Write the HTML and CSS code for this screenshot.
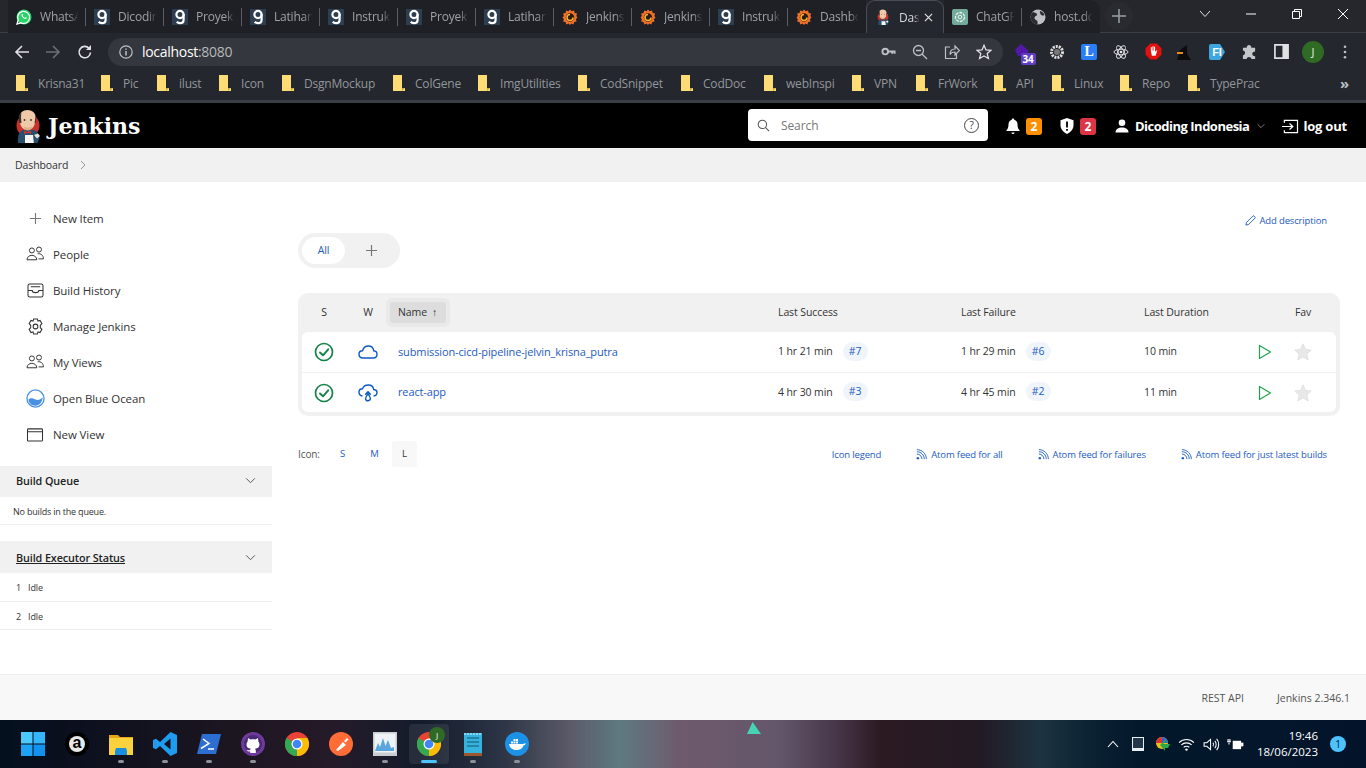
FILE: index.html
```html
<!DOCTYPE html>
<html lang="en">
<head>
    <meta charset="UTF-8">
    <meta name="viewport" content="width=device-width, initial-scale=1.0">
    <title>Dashboard [Jenkins]</title>
    <link rel="stylesheet" href="styles.css">
</head>
<body>
    <svg class="defs" width="0" height="0">
        <symbol id="i-dicoding" viewBox="0 0 16 16">
            <rect width="16" height="16" fill="#2d3e50"/>
            <circle cx="8" cy="5.5" r="3.6" fill="none" stroke="#fff" stroke-width="2.2"/>
            <path d="M11.6 5v5.4c0 2.4-1.5 3.8-3.6 3.8-1.3 0-2.5-.5-3.2-1.4" fill="none" stroke="#fff" stroke-width="2.2"/>
        </symbol>
        <symbol id="i-grafana" viewBox="0 0 16 16">
            <path d="M8 .5l1.7 1.8 2.3-.8.7 2.400 2.400.7-.8 2.300 1.200 1.600-1.700 1.700.8 2.300-2.400.6-.8 2.300-2.200-.8L8 16l-1.500-1.400-2.200.8-.8-2.300-2.400-.6.8-2.300L.5 8.500l1.400-1.600-.8-2.300 2.400-.7.7-2.400 2.300.8z" fill="#f0702a"/>
            <circle cx="8" cy="8.5" r="4.2" fill="#2a1c12"/>
            <path d="M8 5.500a3 3 0 1 0 3 3" fill="none" stroke="#fbb034" stroke-width="1.6"/>
        </symbol>
        <symbol id="i-jenkins" viewBox="0 0 26 34">
            <circle cx="13" cy="16.500" r="11.500" fill="#c8322d"/>
            <path d="M3 34c-.5-5 0-11 5-13h11c3.500 1 5 5 5.500 8l-2 5z" fill="#26506e"/>
            <path d="M10 26h8l.8 8H10z" fill="#f6f4ef"/>
            <path d="M19 26l4-1.500 2 2.500-3 2.500z" fill="#e8e2d8"/>
            <path d="M4.500 8.500C4 4 8 1 12.500 1s8.500 3 8 7.500l-.5 5c-.5 4.500-3.500 7.500-7.500 7.500s-7-3-7.500-7.500z" fill="#efc9a8"/>
            <path d="M4.500 14C3 10 4 5.500 6.500 3.500 5.800 6.500 6 9.500 6.500 14zM20.500 14c1-3 1-5 .3-7l-1.300 7z" fill="#3c3230"/>
            <path d="M8.500 17.500c2.500 1.500 5.500 1.500 8.500 0-.5 3-2.500 4-4.200 4S9 20.500 8.500 17.500z" fill="#d9b08c"/>
            <path d="M9 21.500l3.500 1.500 3.500-1.500v3.500L12.500 23.800 9 25z" fill="#d8322c"/>
            <circle cx="9.500" cy="11" r=".9" fill="#333"/>
            <circle cx="16" cy="11" r=".9" fill="#333"/>
        </symbol>
        <symbol id="i-folder" viewBox="0 0 12 16">
            <path d="M0 0h9v13h3v3H0z" fill="#fddc75"/>
            <path d="M9 13h3l-3 3z" fill="#c9a646"/>
        </symbol>
        <symbol id="i-people" viewBox="0 0 20 18">
            <g fill="none" stroke="#333" stroke-width="1.100">
                <circle cx="6.500" cy="5" r="2.800"/>
                <circle cx="14.500" cy="4" r="2.800"/>
                <path d="M1 15.500c0-3 2.500-5 5.500-5s5.500 2 5.500 5z"/>
                <path d="M13 8.700c3.500-.5 6.500 1.800 6.500 5.800h-5.500"/>
            </g>
        </symbol>
        <symbol id="i-chevron" viewBox="0 0 12 8">
            <path d="M1 1.500l5 5 5-5" fill="none" stroke="currentColor" stroke-width="1.100"/>
        </symbol>
        <symbol id="i-ok" viewBox="0 0 20 20">
            <circle cx="10" cy="10" r="8.500" fill="none" stroke="#138347" stroke-width="1.700"/>
            <path d="M6 10.500l3 2.800 5.200-6" fill="none" stroke="#138347" stroke-width="1.900" stroke-linecap="round" stroke-linejoin="round"/>
        </symbol>
        <symbol id="i-play" viewBox="0 0 14 16">
            <path d="M1.500 1.500v13l11-6.500z" fill="none" stroke="#1ea64b" stroke-width="1.200" stroke-linejoin="round"/>
        </symbol>
        <symbol id="i-star" viewBox="0 0 18 18">
            <path d="M9 .8l2.500 5.500 5.800.7-4.300 4 1.200 6L9 14l-5.200 3 1.200-6-4.300-4 5.800-.7z" fill="#e8e8e8" stroke="#d8d8d8" stroke-width=".6"/>
        </symbol>
        <symbol id="i-rss" viewBox="0 0 12 12">
            <g fill="none" stroke="#1d5cc0" stroke-width="1">
                <path d="M1 5.500c3 0 5.500 2.500 5.500 5.500"/>
                <path d="M1 3c4.500 0 8 3.500 8 8"/>
                <path d="M1 .7c5.700 0 10.300 4.600 10.300 10.300"/>
            </g>
            <circle cx="2" cy="10" r="1.300" fill="#1d5cc0"/>
        </symbol>
        <symbol id="i-chrome" viewBox="0 0 24 24">
            <circle cx="12" cy="12" r="12" fill="#ea4335"/>
            <path d="M12 12L1.600 6A12 12 0 0 0 12 24l5-7z" fill="#34a853"/>
            <path d="M12 6h10.400A12 12 0 0 1 12 24z" fill="#fbbc05"/>
            <circle cx="12" cy="12" r="5.500" fill="#fff"/>
            <circle cx="12" cy="12" r="4.300" fill="#4285f4"/>
        </symbol>
    </svg>

    <div class="chrome">
        <div class="tabstrip">
            <div class="tab">
                <svg class="fav" viewBox="0 0 16 16"><circle cx="8" cy="8" r="7.500" fill="#25d366"/><path d="M1 15l1.200-4A6 6 0 1 1 5 13.800z" fill="none" stroke="#fff" stroke-width="1.300"/><path d="M5.800 5c.5-.6 1-.4 1.300.5.2.6-.4 1-.3 1.300.4.900 1 1.500 1.900 1.900.4 0 .7-.6 1.200-.4.900.3 1.100.8.600 1.300-1.700 1.700-6.300-2.500-4.700-4.600z" fill="#fff"/></svg>
                <span class="tab-title">WhatsA</span>
            </div>
            <div class="tab"><svg class="fav"><use href="#i-dicoding"/></svg><span class="tab-title">Dicodin</span></div>
            <div class="tab"><svg class="fav"><use href="#i-dicoding"/></svg><span class="tab-title">Proyek</span></div>
            <div class="tab"><svg class="fav"><use href="#i-dicoding"/></svg><span class="tab-title">Latihan</span></div>
            <div class="tab"><svg class="fav"><use href="#i-dicoding"/></svg><span class="tab-title">Instruk</span></div>
            <div class="tab"><svg class="fav"><use href="#i-dicoding"/></svg><span class="tab-title">Proyek</span></div>
            <div class="tab"><svg class="fav"><use href="#i-dicoding"/></svg><span class="tab-title">Latihan</span></div>
            <div class="tab"><svg class="fav"><use href="#i-grafana"/></svg><span class="tab-title">Jenkins</span></div>
            <div class="tab"><svg class="fav"><use href="#i-grafana"/></svg><span class="tab-title">Jenkins</span></div>
            <div class="tab"><svg class="fav"><use href="#i-dicoding"/></svg><span class="tab-title">Instruk</span></div>
            <div class="tab tab-prev"><svg class="fav"><use href="#i-grafana"/></svg><span class="tab-title">Dashbo</span></div>
            <div class="tab tab-active">
                <svg class="fav"><use href="#i-jenkins"/></svg>
                <span class="tab-title tab-title-short">Das</span>
                <svg class="tab-close" viewBox="0 0 10 10"><path d="M1 1l8 8M9 1l-8 8" stroke="#dfe1e5" stroke-width="1.300"/></svg>
            </div>
            <div class="tab">
                <svg class="fav" viewBox="0 0 16 16"><rect width="16" height="16" rx="2" fill="#74aa9c"/><circle cx="8" cy="8" r="4.500" fill="none" stroke="#e8f3ef" stroke-width="1.300" stroke-dasharray="3 1"/><circle cx="8" cy="8" r="1.800" fill="none" stroke="#e8f3ef"/></svg>
                <span class="tab-title">ChatGP</span>
            </div>
            <div class="tab tab-last">
                <svg class="fav" viewBox="0 0 16 16"><circle cx="8" cy="8" r="7.500" fill="#bdc1c6"/><path d="M3 3c2 .5 4 1 4 2.500S5 7 4.500 8.500 6 11 7 11.500 7 15 8 15.500C4 15.500.5 12 .5 8c0-2 1-3.700 2.500-5zM10 2c2 .5 4 2 4.500 4-1.500 1-3.500.5-4-1s-1-2 -.5-3z" fill="#292b30"/></svg>
                <span class="tab-title">host.dc</span>
            </div>
            <div class="newtab"><svg viewBox="0 0 14 14" width="14" height="14"><path d="M7 0v14M0 7h14" stroke="#9aa0a6" stroke-width="1.500"/></svg></div>
            <div class="winctrls">
                <svg viewBox="0 0 12 8" width="12" height="8"><path d="M1 1l5 5.500L11 1" fill="none" stroke="#dfe1e5"/></svg>
                <svg viewBox="0 0 10 10" width="10" height="10"><path d="M0 5h10" stroke="#fff"/></svg>
                <svg viewBox="0 0 10 10" width="10" height="10"><path d="M.5 2.500h7v7h-7zM2.500 2.500V.5h7v7h-2" fill="none" stroke="#fff"/></svg>
                <svg viewBox="0 0 10 10" width="10" height="10"><path d="M0 0l10 10M10 0L0 10" stroke="#fff"/></svg>
            </div>
        </div>

        <div class="toolbar">
            <div class="nav-btns">
                <svg viewBox="0 0 16 16" width="16" height="16"><path d="M15 8H2M8 2L2 8l6 6" fill="none" stroke="#dfe1e5" stroke-width="1.600"/></svg>
                <svg viewBox="0 0 16 16" width="16" height="16"><path d="M1 8h13M8 2l6 6-6 6" fill="none" stroke="#6b6f75" stroke-width="1.600"/></svg>
                <svg viewBox="0 0 16 16" width="16" height="16"><path d="M13.500 8.500A5.700 5.700 0 1 1 12 4.200" fill="none" stroke="#dfe1e5" stroke-width="1.600"/><path d="M14 1v5H9z" fill="#dfe1e5"/></svg>
            </div>
            <div class="omnibox">
                <svg class="omni-info" viewBox="0 0 14 14" width="14" height="14"><circle cx="7" cy="7" r="6.200" fill="none" stroke="#bdc1c6" stroke-width="1.200"/><path d="M7 6v4.500M7 3.500v1.300" stroke="#bdc1c6" stroke-width="1.500"/></svg>
                <span class="url">localhost<span class="url-dim">:8080</span></span>
                <div class="omni-icons">
                    <svg viewBox="0 0 16 16" width="15" height="15"><circle cx="4.500" cy="8" r="3" fill="none" stroke="#bdc1c6" stroke-width="2"/><path d="M7 8h8.500M12 8v2.500M14.500 8v2.500" stroke="#bdc1c6" stroke-width="2"/></svg>
                    <svg viewBox="0 0 16 16" width="16" height="16"><circle cx="6.500" cy="6.500" r="5" fill="none" stroke="#bdc1c6" stroke-width="1.300"/><path d="M10 10l5 5M4 6.500h5" stroke="#bdc1c6" stroke-width="1.300"/></svg>
                    <svg viewBox="0 0 16 16" width="16" height="16"><path d="M6 3H1.500v11.500h11V10M6 10.500C6 7 8 5 11 5V2l4.500 4.500L11 11V8c-2 0-4 .5-5 2.500z" fill="none" stroke="#bdc1c6" stroke-width="1.200"/></svg>
                    <svg viewBox="0 0 16 16" width="16" height="16"><path d="M8 1.300l2 4.600 5 .4-3.800 3.300 1.200 4.900L8 12l-4.400 2.500 1.200-4.900L1 6.300l5-.4z" fill="none" stroke="#dfe1e5" stroke-width="1.300"/></svg>
                </div>
            </div>
            <div class="extensions">
                <div class="ext ext-badge">
                    <svg viewBox="0 0 16 16" width="16" height="16"><path d="M6 0l8 7-5 5H3L0 6z" fill="#5218a8"/></svg>
                    <span class="ext-count">34</span>
                </div>
                <div class="ext"><svg viewBox="0 0 16 16" width="16" height="16"><circle cx="8" cy="8" r="5.500" fill="none" stroke="#ddd" stroke-width="3" stroke-dasharray="2 1"/><circle cx="8" cy="8" r="3" fill="#777"/></svg></div>
                <div class="ext"><svg viewBox="0 0 16 16" width="16" height="16"><rect width="16" height="16" rx="2" fill="#2b7ff6"/></svg><span class="ext-letter">L</span></div>
                <div class="ext"><svg viewBox="0 0 16 16" width="16" height="16"><g fill="none" stroke="#e8eaed" stroke-width=".9"><ellipse cx="8" cy="8" rx="7" ry="2.800"/><ellipse cx="8" cy="8" rx="7" ry="2.800" transform="rotate(60 8 8)"/><ellipse cx="8" cy="8" rx="7" ry="2.800" transform="rotate(120 8 8)"/></g><circle cx="8" cy="8" r="1.300" fill="#e8eaed"/></svg></div>
                <div class="ext"><svg viewBox="0 0 16 16" width="17" height="17"><path d="M5 .5h6L15.500 5v6L11 15.500H5L.5 11V5z" fill="#e2110d"/><path d="M5.500 7.500V4h1v3h.5V3h1v4h.5V3.500h1V8h.5l.5-1h1l-1.500 5H6.500z" fill="#fff"/></svg></div>
                <div class="ext"><svg viewBox="0 0 16 16" width="16" height="16"><path d="M0 16l3-10 7-5v9l4 6z" fill="#0c0c0c"/><path d="M0 8h6v2H0z" fill="#e88a1a"/></svg></div>
                <div class="ext"><svg viewBox="0 0 16 16" width="16" height="16"><path d="M0 2a2 2 0 0 1 2-2h9l5 8-5 8H2a2 2 0 0 1-2-2z" fill="#3fa5e0"/></svg><span class="ext-letter ext-letter-fi">FI</span></div>
                <div class="ext"><svg viewBox="0 0 16 16" width="15" height="15"><path d="M1 4h4c0-4 5-4 5 0h4v4c-4 0-4 5 0 5v3h-4c0-3-5-3-5 0H1v-4c3 0 3-5 0-5z" fill="#c4c7ca"/></svg></div>
                <div class="ext"><svg viewBox="0 0 16 16" width="15" height="15"><path d="M1 1h14v14H1z" fill="none" stroke="#dfe1e5" stroke-width="1.800"/><path d="M9 1h6v14H9z" fill="#dfe1e5"/></svg></div>
                <div class="avatar">J</div>
                <div class="ext"><svg viewBox="0 0 4 16" width="4" height="14"><circle cx="2" cy="2" r="1.500" fill="#bdc1c6"/><circle cx="2" cy="8" r="1.500" fill="#bdc1c6"/><circle cx="2" cy="14" r="1.500" fill="#bdc1c6"/></svg></div>
            </div>
        </div>

        <div class="bookmarks">
            <a class="bm"><svg><use href="#i-folder"/></svg>Krisna31</a>
            <a class="bm"><svg><use href="#i-folder"/></svg>Pic</a>
            <a class="bm"><svg><use href="#i-folder"/></svg>ilust</a>
            <a class="bm"><svg><use href="#i-folder"/></svg>Icon</a>
            <a class="bm"><svg><use href="#i-folder"/></svg>DsgnMockup</a>
            <a class="bm"><svg><use href="#i-folder"/></svg>ColGene</a>
            <a class="bm"><svg><use href="#i-folder"/></svg>ImgUtilities</a>
            <a class="bm"><svg><use href="#i-folder"/></svg>CodSnippet</a>
            <a class="bm"><svg><use href="#i-folder"/></svg>CodDoc</a>
            <a class="bm"><svg><use href="#i-folder"/></svg>webInspi</a>
            <a class="bm"><svg><use href="#i-folder"/></svg>VPN</a>
            <a class="bm"><svg><use href="#i-folder"/></svg>FrWork</a>
            <a class="bm"><svg><use href="#i-folder"/></svg>API</a>
            <a class="bm"><svg><use href="#i-folder"/></svg>Linux</a>
            <a class="bm"><svg><use href="#i-folder"/></svg>Repo</a>
            <a class="bm"><svg><use href="#i-folder"/></svg>TypePrac</a>
            <span class="bm-more">»</span>
        </div>
    </div>

    <header class="jk-header">
        <a class="brand">
            <svg class="brand-logo"><use href="#i-jenkins"/></svg>
            <span class="brand-name">Jenkins</span>
        </a>
        <div class="searchbox">
            <svg viewBox="0 0 14 14" width="13" height="13"><circle cx="5.800" cy="5.800" r="4.500" fill="none" stroke="#555" stroke-width="1.100"/><path d="M9 9l4 4" stroke="#555" stroke-width="1.100"/></svg>
            <span class="search-text">Search</span>
            <span class="search-help">?</span>
        </div>
        <div class="hdr-item hdr-bell">
            <svg viewBox="0 0 14 16" width="14" height="16"><path d="M7 .5c.7 0 1.200.5 1.200 1.200 2.300.5 3.300 2.500 3.300 4.800 0 3 .7 4.500 2 5.500v1H.5v-1c1.300-1 2-2.500 2-5.500 0-2.300 1-4.300 3.300-4.800C5.800 1 6.300.5 7 .5zM5.500 14.500h3a1.500 1.500 0 0 1-3 0z" fill="#fff"/></svg>
            <span class="count count-warn">2</span>
        </div>
        <div class="hdr-item hdr-shield">
            <svg viewBox="0 0 14 16" width="14" height="16"><path d="M7 0l6.500 2.300v5c0 4-3 7-6.500 8.700C3.500 14.300.5 11.300.5 7.300v-5z" fill="#fff"/><path d="M7 3.500v6M7 11v1.800" stroke="#000" stroke-width="1.800"/></svg>
            <span class="count count-danger">2</span>
        </div>
        <div class="hdr-item hdr-user">
            <svg viewBox="0 0 14 14" width="14" height="14"><circle cx="7" cy="3.800" r="3.300" fill="#fff"/><path d="M.5 13.500c0-3.500 3-5 6.500-5s6.500 1.500 6.500 5z" fill="#fff"/></svg>
            <span class="user-name">Dicoding Indonesia</span>
            <svg class="user-caret"><use href="#i-chevron"/></svg>
        </div>
        <div class="hdr-item hdr-logout">
            <svg viewBox="0 0 18 16" width="18" height="15"><path d="M3 4V1.500h14v13H3V12" fill="none" stroke="#fff" stroke-width="1.300"/><path d="M.5 8h11M8.500 4.800L12 8l-3.500 3.200" fill="none" stroke="#fff" stroke-width="1.300"/></svg>
            <span class="logout-text">log out</span>
        </div>
    </header>

    <nav class="crumbs">
        <a>Dashboard</a>
        <svg viewBox="0 0 6 10" width="6" height="10"><path d="M1 1l4 4-4 4" fill="none" stroke="#999"/></svg>
    </nav>

    <div class="page">
        <aside class="sidebar">
            <ul class="tasks">
                <li class="task">
                    <svg viewBox="0 0 14 14" width="13" height="13"><path d="M7 1v12M1 7h12" stroke="#777" stroke-width="1.200"/></svg>
                    <span>New Item</span>
                </li>
                <li class="task"><svg viewBox="0 0 20 18" width="18" height="16"><use href="#i-people"/></svg><span>People</span></li>
                <li class="task">
                    <svg viewBox="0 0 18 16" width="17" height="15"><g fill="none" stroke="#333" stroke-width="1.100"><rect x="1" y="1" width="16" height="14" rx="2"/><path d="M1 8h4.500c0 3 7 3 7 0H17M4 4h10"/></g></svg>
                    <span>Build History</span>
                </li>
                <li class="task">
                    <svg viewBox="0 0 18 18" width="17" height="17"><g fill="none" stroke="#333" stroke-width="1.100"><path d="M7 1h4l.6 2.300 2.200-.7 2 3.400-1.700 1.700v2.600L15.800 12l-2 3.400-2.200-.7L11 17H7l-.6-2.300-2.200.7-2-3.400 1.700-1.700V7.700L2.200 6l2-3.400 2.200.7z"/><circle cx="9" cy="9" r="2.500"/></g></svg>
                    <span>Manage Jenkins</span>
                </li>
                <li class="task"><svg viewBox="0 0 20 18" width="18" height="16"><use href="#i-people"/></svg><span>My Views</span></li>
                <li class="task">
                    <svg viewBox="0 0 20 20" width="19" height="19"><circle cx="10" cy="10" r="9" fill="#fff" stroke="#4a90e2" stroke-width="1.400"/><path d="M2.500 11c3-2.500 5-1 7.500 0s5 .5 7.500-2c0 4.500-3.500 8.500-7.500 8.500S2.800 15 2.500 11z" fill="#4a90e2"/></svg>
                    <span>Open Blue Ocean</span>
                </li>
                <li class="task">
                    <svg viewBox="0 0 18 16" width="18" height="15"><path d="M1 3a1 1 0 0 1 1-1h14a1 1 0 0 1 1 1v11a1 1 0 0 1-1 1H2a1 1 0 0 1-1-1zM1 5h16" fill="none" stroke="#333" stroke-width="1.100"/></svg>
                    <span>New View</span>
                </li>
            </ul>

            <section class="pane pane-queue">
                <div class="pane-head"><span>Build Queue</span><svg class="pane-caret"><use href="#i-chevron"/></svg></div>
                <div class="pane-row pane-empty">No builds in the queue.</div>
            </section>

            <section class="pane pane-exec">
                <div class="pane-head pane-head-tall"><u>Build Executor Status</u><svg class="pane-caret"><use href="#i-chevron"/></svg></div>
                <div class="pane-row exec-row"><span class="exec-no">1</span>Idle</div>
                <div class="pane-row exec-row"><span class="exec-no">2</span>Idle</div>
            </section>
        </aside>

        <main class="main">
            <div class="desc-row">
                <a class="link">
                    <svg viewBox="0 0 12 12" width="12" height="12"><path d="M1 11l.7-3L8.500 1.200a1 1 0 0 1 1.400 0l.9.900a1 1 0 0 1 0 1.400L4 10.300z" fill="none" stroke="#1d5cc0"/></svg>
                    Add description
                </a>
            </div>

            <div class="view-tabs">
                <a class="view-tab">All</a>
                <svg viewBox="0 0 12 12" width="11" height="11"><path d="M6 0v12M0 6h12" stroke="#777" stroke-width="1.300"/></svg>
            </div>

            <div class="jobs">
                <div class="job-row job-head">
                    <span class="cell-c">S</span>
                    <span class="cell-c">W</span>
                    <span class="sort-wrap"><span class="sort-btn">Name<span class="sort-arrow">↑</span></span></span>
                    <span>Last Success</span>
                    <span>Last Failure</span>
                    <span>Last Duration</span>
                    <span></span>
                    <span class="cell-c">Fav</span>
                </div>
                <div class="job-row job-item job-first">
                    <svg class="cell-c status"><use href="#i-ok"/></svg>
                    <svg class="cell-c weather" viewBox="0 0 20 14"><path d="M5 13C2.500 13 1 11.300 1 9.300c0-2 1.500-3.500 3.500-3.500C5.300 3 7.500 1 10.300 1c3 0 5 2 5.400 4.800 2 .2 3.300 1.600 3.300 3.500 0 2-1.500 3.700-3.700 3.700z" fill="none" stroke="#0b5ac2" stroke-width="1.400"/></svg>
                    <a class="job-name">submission-cicd-pipeline-jelvin_krisna_putra</a>
                    <span class="when">1 hr 21 min<a class="build-no">#7</a></span>
                    <span class="when">1 hr 29 min<a class="build-no">#6</a></span>
                    <span>10 min</span>
                    <svg class="play"><use href="#i-play"/></svg>
                    <svg class="cell-c fav-star"><use href="#i-star"/></svg>
                </div>
                <div class="job-row job-item job-last">
                    <svg class="cell-c status"><use href="#i-ok"/></svg>
                    <svg class="cell-c weather weather-rain" viewBox="0 0 20 18"><path d="M4.500 12C2.300 11.800 1 10.300 1 8.300c0-2 1.500-3.500 3.500-3.500C5.300 2.500 7.500 1 10.300 1c3 0 5 2 5.400 4.500 2 .2 3.300 1.300 3.300 3 0 2-1.300 3.300-3.500 3.500M10 7.500l-2.700 3.300M10 7.500l2.700 3.300M10 9.800c-1.500 2-2.400 3.300-2.400 4.600a2.400 2.400 0 0 0 4.800 0c0-1.300-.9-2.600-2.400-4.600z" fill="none" stroke="#0b5ac2" stroke-width="1.400"/></svg>
                    <a class="job-name">react-app</a>
                    <span class="when">4 hr 30 min<a class="build-no">#3</a></span>
                    <span class="when">4 hr 45 min<a class="build-no">#2</a></span>
                    <span>11 min</span>
                    <svg class="play"><use href="#i-play"/></svg>
                    <svg class="cell-c fav-star"><use href="#i-star"/></svg>
                </div>
            </div>

            <div class="legend-row">
                <div class="icon-size">
                    <span class="icon-label">Icon:</span>
                    <a class="size-btn">S</a>
                    <a class="size-btn">M</a>
                    <span class="size-btn size-on">L</span>
                </div>
                <div class="feeds">
                    <a class="link">Icon legend</a>
                    <a class="link"><svg><use href="#i-rss"/></svg>Atom feed for all</a>
                    <a class="link"><svg><use href="#i-rss"/></svg>Atom feed for failures</a>
                    <a class="link"><svg><use href="#i-rss"/></svg>Atom feed for just latest builds</a>
                </div>
            </div>
        </main>
    </div>

    <footer class="jk-footer">
        <a>REST API</a>
        <a>Jenkins 2.346.1</a>
    </footer>

    <div class="taskbar">
        <div class="task-icons">
            <div class="tb">
                <svg viewBox="0 0 24 24" width="24" height="24"><path d="M0 0h11.500v11.500H0z" fill="#4cc9fe"/><path d="M12.500 0H24v11.500H12.500z" fill="#35b6fb"/><path d="M0 12.500h11.500V24H0z" fill="#1ea2f5"/><path d="M12.500 12.500H24V24H12.500z" fill="#1391ef"/></svg>
            </div>
            <div class="tb">
                <svg viewBox="0 0 24 24" width="24" height="24"><circle cx="12" cy="12" r="12" fill="#000"/><circle cx="12" cy="12" r="8" fill="#e8e8e8"/></svg>
                <span class="tb-a">a</span>
            </div>
            <div class="tb tb-run">
                <svg viewBox="0 0 24 24" width="24" height="24"><path d="M0 3h9l2 2h13v4H0z" fill="#e6a817"/><path d="M0 6h24v17H0z" fill="#fbd13d"/><path d="M7 16h10l1 3v4H6v-4z" fill="#1a8fe0"/></svg>
            </div>
            <div class="tb tb-run">
                <svg viewBox="0 0 24 24" width="24" height="24"><path d="M17.500 0L24 3v18l-6.500 3L7 14l-4 3.200L0 16V8l3-1.200L7 10zM17.500 6.500L11 12l6.500 5.500z" fill="#1f9cf0"/></svg>
            </div>
            <div class="tb tb-run">
                <svg viewBox="0 0 24 24" width="24" height="24"><path d="M5 2h19l-5 20H0z" fill="#2c6fd1"/><path d="M6 7l6 4.500-8 5M11 17h6" fill="none" stroke="#fff" stroke-width="1.500"/></svg>
            </div>
            <div class="tb tb-run">
                <svg viewBox="0 0 24 24" width="24" height="24"><circle cx="12" cy="12" r="12" fill="#6f3a9c"/><circle cx="12" cy="12" r="9" fill="#4a2a78"/><path d="M7 6l2.500 1.500c1.500-.4 3.500-.4 5 0L17 6l.4 3.500c.8 1 1.100 2 1.100 3 0 2.500-1.500 3.800-4.500 4.200.5.500.8 1.200.8 2v2.300H9.200v-1.600c-2 .3-3-.5-3.700-2 .8.500 1.700 1.200 3.700.6 0-.5.200-1 .6-1.300-3-.4-4.300-1.700-4.300-4.200 0-1 .3-2 1.100-3z" fill="#fff"/></svg>
            </div>
            <div class="tb"><svg width="24" height="24"><use href="#i-chrome"/></svg></div>
            <div class="tb">
                <svg viewBox="0 0 24 24" width="24" height="24"><circle cx="12" cy="12" r="12" fill="#ff6c37"/><path d="M7 18l7-8 3 3-8 6zM15 9l3-3 1.500 1.500-3 3z" fill="#fff"/></svg>
            </div>
            <div class="tb tb-run">
                <svg viewBox="0 0 24 24" width="24" height="24"><rect width="24" height="24" fill="#c9cdd0"/><rect x="1.500" y="1.500" width="21" height="19" fill="#eef3f7"/><path d="M2 19l3-8 2 4 3-9 2.500 8 2.500-6 3 8 3-1v4z" fill="#5aa5dc"/></svg>
            </div>
            <div class="tb tb-active">
                <svg width="24" height="24"><use href="#i-chrome"/></svg>
                <span class="tb-avatar">J</span>
                <span class="tb-bar"></span>
            </div>
            <div class="tb tb-run">
                <svg viewBox="0 0 20 24" width="20" height="24"><path d="M1 1h18v20H1z" fill="#35b3dc"/><path d="M1 21h18v3H1z" fill="#a0562c"/><path d="M4 6h12M4 10h12M4 14h12" stroke="#12576f" stroke-width="1.200"/><path d="M2 1v2M5 1v2M8 1v2M11 1v2M14 1v2M17 1v2" stroke="#dff3fa"/></svg>
            </div>
            <div class="tb tb-run">
                <svg viewBox="0 0 24 24" width="24" height="24"><circle cx="12" cy="12" r="12" fill="#1d91e6"/><path d="M4 12h14c1 0 2-.8 2.500-1 .3 2-1 2-2 2.500-1 3-3.500 4.500-7 4.500-4.500 0-7-2.500-7.500-6z" fill="#fff"/><path d="M6 9.500h2v2H6zM8.500 9.500h2v2h-2zM11 9.500h2v2h-2zM8.500 7h2v2h-2zM11 7h2v2h-2z" fill="#fff"/></svg>
            </div>
        </div>
        <div class="tray">
            <svg viewBox="0 0 12 8" width="12" height="8"><path d="M1 7l5-5.500L11 7" fill="none" stroke="#fff" stroke-width="1.100"/></svg>
            <svg viewBox="0 0 12 14" width="12" height="14"><path d="M0 0h12v14H0z" fill="#e8eef2"/><path d="M1 1h10v10H1z" fill="#23364a"/></svg>
            <svg viewBox="0 0 16 14" width="16" height="14"><circle cx="8" cy="6" r="6" fill="#e8c21c"/><path d="M2 6a6 6 0 0 1 6-6v6z" fill="#d33"/><path d="M8 0a6 6 0 0 1 6 6H8z" fill="#3466cc"/><path d="M16 7H9l3-3v-2l-6 6 5 6v-3h3z" fill="#2aa84a"/></svg>
            <svg viewBox="0 0 18 14" width="17" height="13"><g fill="none" stroke="#fff" stroke-width="1.200"><path d="M1 5c4.500-4.500 11.500-4.500 16 0"/><path d="M3.500 7.500c3-3 8-3 11 0"/><path d="M6 10c1.500-1.500 4.500-1.500 6 0"/></g><circle cx="9" cy="12.500" r="1.300" fill="#fff"/></svg>
            <svg viewBox="0 0 18 14" width="17" height="13"><g fill="none" stroke="#fff" stroke-width="1.100"><path d="M1 5v4h3l4 3.500v-11L4 5z"/><path d="M10.500 5c1 1.200 1 2.800 0 4M12.500 3c2 2.200 2 5.800 0 8M14.500 1c3 3.400 3 8.600 0 12"/></g></svg>
            <svg viewBox="0 0 18 14" width="17" height="13"><path d="M6 3h9v9H6z" fill="#fff"/><path d="M15 5h2.500v4H15z" fill="#fff"/><path d="M0 4h4M1 1v3M3 1v3M2 5v2" stroke="#fff" stroke-width="1.200"/></svg>
        </div>
        <div class="clock">
            <span>19:46</span>
            <span>18/06/2023</span>
        </div>
        <span class="notif">1</span>
    </div>
</body>
</html>
```

FILE: styles.css
```css
* {
    box-sizing: border-box;
}
html, body {
    height: 768px;
    overflow: hidden;
}
body {
    margin: 0;
    display: flex;
    flex-direction: column;
    font-family: "Open Sans", "Noto Sans", sans-serif;
    letter-spacing: -0.1px;
    color: #333;
    background-color: #fff;
}
.defs {
    position: absolute;
}
a {
    text-decoration: none;
}

/* browser window */
.chrome {
    height: 103px;
    flex: none;
    background-color: #24272e;
    border-bottom: 3px solid #3a3e46;
}
.tabstrip {
    height: 33px;
    display: flex;
    padding-left: 8px;
    background-color: #25272d;
    border-bottom: 1px solid #3b3e45;
}
.tab {
    width: 78px;
    height: 33px;
    flex: none;
    display: flex;
    align-items: center;
    gap: 8px;
    padding-left: 8px;
    background-color: #1e2026;
    position: relative;
}
.tab::after {
    content: "";
    position: absolute;
    right: 0;
    top: 8px;
    height: 18px;
    width: 1px;
    background-color: #5b5e64;
}
.tab-prev::after,
.tab-active::after,
.tab-last::after {
    display: none;
}
.tab-last {
    border-top-right-radius: 10px;
}
.tab-active {
    background-color: #24272e;
    border: 1px solid #4a4d55;
    border-bottom: none;
    border-radius: 9px 9px 0 0;
    z-index: 1;
}
.fav {
    width: 16px;
    height: 16px;
    flex: none;
}
.tab-title {
    width: 42px;
    overflow: hidden;
    white-space: nowrap;
    font-size: 12px;
    letter-spacing: -0.2px;
    color: #9ea1a6;
    -webkit-mask-image: linear-gradient(to right, #000 70%, transparent 92%);
    mask-image: linear-gradient(to right, #000 70%, transparent 92%);
}
.tab-title-short {
    width: 22px;
    color: #d5d7da;
}
.tab-close {
    width: 9px;
    height: 9px;
    flex: none;
    margin-left: -5px;
}
.newtab {
    width: 28px;
    height: 28px;
    margin: 2px 0 0 5px;
    border-radius: 50%;
    background-color: #292b31;
    display: flex;
    align-items: center;
    justify-content: center;
}
.winctrls {
    margin-left: auto;
    width: 184px;
    display: grid;
    grid-template-columns: repeat(4, 46px);
    justify-items: center;
    align-items: center;
    height: 28px;
}

.toolbar {
    height: 34px;
    padding-top: 3px;
    display: flex;
    align-items: center;
}
.nav-btns {
    width: 108px;
    flex: none;
    display: grid;
    grid-template-columns: 15px 16px 16px;
    column-gap: 16px;
    padding-left: 14px;
}
.omnibox {
    width: 895px;
    height: 28px;
    flex: none;
    display: flex;
    align-items: center;
    border-radius: 14px;
    background-color: #34373d;
    padding-left: 11px;
}
.url {
    margin-left: 9px;
    font-size: 14px;
    color: #fff;
    letter-spacing: -0.3px;
}
.url-dim {
    color: #b4b7bb;
}
.omni-icons {
    margin-left: auto;
    display: grid;
    grid-template-columns: repeat(4, 32px);
    justify-items: center;
    margin-right: 3px;
}
.extensions {
    display: grid;
    grid-template-columns: repeat(11, 32px);
    margin-left: 6px;
    justify-items: center;
    align-items: center;
}
.ext {
    position: relative;
    display: flex;
    align-items: center;
    justify-content: center;
    height: 20px;
}
.ext-badge {
    margin-left: -5px;
}
.ext-count {
    position: absolute;
    left: 6px;
    top: 11px;
    padding: 0 2px;
    border-radius: 2px;
    background-color: #5f3dc4;
    color: #fff;
    font-size: 10px;
    font-weight: 700;
    line-height: 12px;
}
.ext-letter {
    position: absolute;
    inset: 0;
    text-align: center;
    color: #fff;
    font-family: "Liberation Serif", serif;
    font-weight: 700;
    font-size: 14px;
    line-height: 20px;
}
.ext-letter-fi {
    font-family: "Liberation Sans", sans-serif;
    font-size: 11px;
}
.avatar {
    width: 22px;
    height: 22px;
    border-radius: 50%;
    background-color: #2f6b24;
    color: #e6efe4;
    text-align: center;
    font-size: 11px;
    line-height: 22px;
}

.bookmarks {
    height: 33px;
    display: grid;
    grid-template-columns: 85px 56px 62px 63px 111px 85px 100px 103px 83px 88px 64px 78px 58px 68px 68px 152px 1fr;
    align-items: center;
    padding-left: 16px;
    padding-bottom: 1px;
}
.bm {
    display: flex;
    align-items: center;
    gap: 10px;
    font-size: 12px;
    letter-spacing: -0.2px;
    color: #93969b;
    white-space: nowrap;
}
.bm svg {
    width: 12px;
    height: 16px;
    flex: none;
}
.bm-more {
    color: #bdc1c6;
    font-size: 15px;
    font-weight: 700;
}

/* jenkins header */
.jk-header {
    height: 45px;
    flex: none;
    display: flex;
    align-items: center;
    background-color: #000;
    color: #fff;
}
.brand {
    display: flex;
    align-items: center;
    width: 748px;
    flex: none;
    padding-left: 15px;
}
.brand-logo {
    width: 26px;
    height: 34px;
}
.brand-name {
    margin-left: 7px;
    font-family: "DejaVu Serif", "Liberation Serif", serif;
    font-weight: 700;
    font-size: 22px;
    letter-spacing: 0;
}
.searchbox {
    width: 240px;
    height: 32px;
    flex: none;
    margin-top: -1px;
    display: flex;
    align-items: center;
    padding: 0 9px;
    background-color: #fff;
    border-radius: 4px;
}
.search-text {
    margin-left: 11px;
    font-size: 12px;
    color: #777;
}
.search-help {
    margin-left: auto;
    width: 15px;
    height: 15px;
    border: 1px solid #444;
    border-radius: 50%;
    text-align: center;
    font-size: 10px;
    line-height: 13px;
    color: #444;
}
.hdr-item {
    display: flex;
    align-items: center;
    flex: none;
    margin-top: 1px;
}
.hdr-bell {
    margin-left: 18px;
    gap: 6px;
}
.hdr-shield {
    margin-left: 18px;
    gap: 6px;
}
.count {
    width: 16px;
    height: 17px;
    border-radius: 3px;
    color: #fff;
    font-size: 12px;
    font-weight: 700;
    line-height: 17px;
    text-align: center;
}
.count-warn {
    background-color: #fe9000;
}
.count-danger {
    background-color: #dc3545;
}
.hdr-user {
    margin-left: 19px;
    gap: 6px;
}
.user-name,
.logout-text {
    font-size: 13px;
    font-weight: 700;
    white-space: nowrap;
    letter-spacing: -0.5px;
}
.logout-text {
    letter-spacing: -0.2px;
}
.user-caret {
    width: 8px;
    height: 6px;
    margin-left: 2px;
    color: #aaa;
}
.hdr-logout {
    margin-left: 16px;
    gap: 4px;
}

.crumbs {
    height: 34px;
    flex: none;
    display: flex;
    align-items: center;
    gap: 12px;
    padding-left: 15px;
    background-color: #f1f1f1;
    font-size: 10.5px;
    color: #333;
}

/* page body */
.page {
    flex: 1;
    display: flex;
    min-height: 0;
}
.sidebar {
    width: 272px;
    flex: none;
    padding-top: 18px;
}
.tasks {
    list-style: none;
    margin: 0;
    padding: 0;
}
.task {
    height: 36px;
    display: grid;
    grid-template-columns: 18px 1fr;
    column-gap: 9px;
    padding-left: 26px;
    align-items: center;
    font-size: 11.5px;
    color: #333;
}
.task svg {
    justify-self: center;
}
.pane {
    font-size: 9px;
    color: #333;
}
.pane-queue {
    margin-top: 14px;
}
.pane-exec {
    margin-top: 16px;
}
.pane-head {
    height: 31px;
    display: flex;
    align-items: center;
    justify-content: space-between;
    padding: 0 16px 2px;
    background-color: #f1f1f1;
    font-size: 10.8px;
    font-weight: 600;
    color: #222;
}
.pane-head-tall {
    height: 32px;
    padding-bottom: 0;
}
.pane-caret {
    width: 11px;
    height: 7px;
    color: #555;
}
.pane-row {
    height: 28px;
    display: flex;
    align-items: center;
    padding: 2px 0 0 16px;
    border-bottom: 1px solid #eee;
}
.exec-row {
    height: 28.5px;
}
.pane-empty {
    padding-left: 13px;
    letter-spacing: -0.2px;
}
.exec-no {
    width: 12px;
}

.main {
    flex: 1;
    min-width: 0;
    padding: 31px 26px 0 26px;
}
.link {
    display: inline-flex;
    align-items: center;
    gap: 4px;
    font-size: 9.5px;
    letter-spacing: -0.15px;
    color: #1d5cc0;
    white-space: nowrap;
}
.link svg {
    width: 11px;
    height: 11px;
}
.desc-row {
    display: flex;
    justify-content: flex-end;
    height: 14px;
    margin-right: 13px;
}
.view-tabs {
    width: 102px;
    height: 35px;
    margin-top: 6px;
    padding: 4px;
    display: flex;
    align-items: center;
    gap: 21px;
    background-color: #f1f1f1;
    border-radius: 18px;
}
.view-tab {
    width: 43px;
    height: 27px;
    border-radius: 14px;
    background-color: #fff;
    color: #1d5cc0;
    text-align: center;
    font-size: 10.5px;
    line-height: 27px;
}

.jobs {
    width: 1042px;
    margin-top: 25px;
    padding: 0 4px 4px;
    background-color: #f1f1f1;
    border-radius: 10px;
}
.job-row {
    display: grid;
    grid-template-columns: 44px 44px 388px 183px 183px 106px 34px 38px 14px;
    align-items: center;
    font-size: 10.5px;
    color: #333;
}
.job-row > span,
.job-row > a {
    margin-bottom: 2px;
}
.job-head {
    height: 39px;
}
.job-item {
    height: 40px;
    background-color: #fff;
}
.job-first {
    border-radius: 6px 6px 0 0;
    margin-bottom: 1px;
}
.job-last {
    height: 39px;
    border-radius: 0 0 6px 6px;
}
.cell-c {
    justify-self: center;
}
.job-row > .sort-wrap {
    margin: 0 0 0 -4px;
    width: 64px;
    height: 29px;
    padding: 4px;
    background-color: #e9e9e9;
    border-radius: 6px;
}
.sort-btn {
    display: block;
    height: 21px;
    padding-left: 8px;
    background-color: #ddd;
    border-radius: 3px;
    line-height: 21px;
}
.sort-arrow {
    margin-left: 5px;
    font-size: 10.5px;
}
.status {
    width: 20px;
    height: 20px;
}
.weather {
    width: 20px;
    height: 14px;
}
.weather-rain {
    height: 18px;
}
.job-name {
    padding-left: 8px;
    font-size: 11px;
    letter-spacing: -0.13px;
    color: #1d5cc0;
    white-space: nowrap;
}
.when {
    display: flex;
    align-items: center;
    gap: 10px;
}
.build-no {
    width: 25px;
    height: 19px;
    border-radius: 10px;
    background-color: #f0f4fb;
    color: #1d5cc0;
    text-align: center;
    line-height: 19px;
}
.play {
    width: 14px;
    height: 16px;
    justify-self: start;
    margin-left: 8px;
}
.fav-star {
    width: 18px;
    height: 18px;
}

.legend-row {
    display: flex;
    justify-content: space-between;
    align-items: center;
    width: 1029px;
    height: 26px;
    margin-top: 25px;
}
.icon-size {
    display: flex;
    align-items: center;
    font-size: 10px;
}
.icon-label {
    width: 32px;
    color: #555;
}
.size-btn {
    width: 25px;
    height: 26px;
    margin-right: 7px;
    text-align: center;
    line-height: 26px;
    color: #1d5cc0;
    font-size: 9.5px;
}
.size-on {
    margin-left: -2px;
    background-color: #f8f8f8;
    border-radius: 3px;
    color: #333;
}
.feeds {
    display: flex;
    gap: 35px;
}

.jk-footer {
    height: 46px;
    flex: none;
    display: flex;
    justify-content: flex-end;
    align-items: center;
    gap: 33px;
    padding-right: 16px;
    background-color: #f8f8f8;
    border-top: 1px solid #eee;
    font-size: 10.5px;
    letter-spacing: 0;
    color: #555;
}

/* windows taskbar */
.taskbar {
    height: 48px;
    flex: none;
    display: flex;
    align-items: center;
    position: relative;
    background: linear-gradient(to right, #04101f 0, #0a0f1e 60px, #1c1620 230px, #251a28 330px, #141c2c 420px, #2b3444 500px, #5a5a68 570px, #5f7a82 620px, #6e5a6c 680px, #64566a 780px, #4a3a4e 830px, #2c1a22 880px, #221a24 980px, #1d3340 1040px, #0b2233 1090px, #03182b 1140px, #03142a 1366px);
    color: #fff;
}
.taskbar::before {
    content: "";
    position: absolute;
    left: 747px;
    top: 2px;
    width: 14px;
    height: 12px;
    background-color: #46d4b4;
    clip-path: polygon(40% 0, 100% 100%, 0 100%);
}
.task-icons {
    display: grid;
    grid-template-columns: repeat(12, 44px);
    margin-left: 11px;
    justify-items: center;
    align-items: center;
    position: relative;
}
.tb {
    position: relative;
    width: 40px;
    height: 40px;
    display: flex;
    align-items: center;
    justify-content: center;
}
.tb-run::after {
    content: "";
    position: absolute;
    left: 17px;
    bottom: 1px;
    width: 6px;
    height: 3px;
    border-radius: 2px;
    background-color: #8d9298;
}
.tb-a {
    position: absolute;
    inset: 0;
    text-align: center;
    color: #000;
    font-family: "Liberation Sans", sans-serif;
    font-size: 16px;
    font-weight: 700;
    line-height: 38px;
}
.tb-active {
    border-radius: 4px;
    background-color: rgba(255, 255, 255, 0.08);
}
.tb-avatar {
    position: absolute;
    left: 20px;
    top: 3px;
    width: 16px;
    height: 16px;
    border-radius: 50%;
    background-color: #2f6b24;
    font-size: 8px;
    line-height: 16px;
    text-align: center;
}
.tb-bar {
    position: absolute;
    left: 12px;
    bottom: 1px;
    width: 16px;
    height: 3px;
    border-radius: 2px;
    background-color: #4cc2ff;
}
.tray {
    margin-left: auto;
    display: grid;
    grid-template-columns: repeat(6, 24.5px);
    justify-items: center;
    align-items: center;
    margin-right: -10px;
}
.clock {
    width: 80px;
    display: flex;
    flex-direction: column;
    align-items: flex-end;
    font-size: 11.5px;
    letter-spacing: 0;
    line-height: 16px;
}
.notif {
    width: 16px;
    height: 16px;
    margin: 0 20px 0 12px;
    border-radius: 50%;
    background-color: #4cc2ff;
    color: #06202f;
    text-align: center;
    font-size: 10px;
    line-height: 16px;
}
```
